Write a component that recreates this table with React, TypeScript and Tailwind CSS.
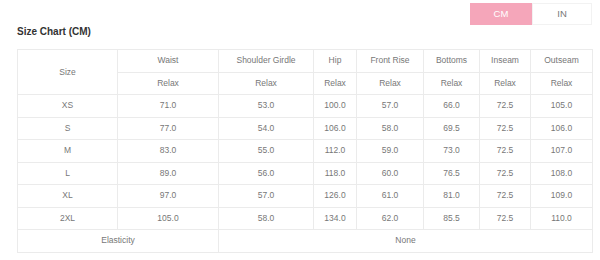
import React from 'react';

const columns = ['Waist', 'Shoulder Girdle', 'Hip', 'Front Rise', 'Bottoms', 'Inseam', 'Outseam'];
const widths = ['w-[100px]', 'w-[101px]', 'w-[95px]', 'w-[43px]', 'w-[67px]', 'w-[56px]', 'w-[51px]', 'w-[62px]'];

const rows: [string, string[]][] = [
  ['XS', ['71.0', '53.0', '100.0', '57.0', '66.0', '72.5', '105.0']],
  ['S', ['77.0', '54.0', '106.0', '58.0', '69.5', '72.5', '106.0']],
  ['M', ['83.0', '55.0', '112.0', '59.0', '73.0', '72.5', '107.0']],
  ['L', ['89.0', '56.0', '118.0', '60.0', '76.5', '72.5', '108.0']],
  ['XL', ['97.0', '57.0', '126.0', '61.0', '81.0', '72.5', '109.0']],
  ['2XL', ['105.0', '58.0', '134.0', '62.0', '85.5', '72.5', '110.0']],
];

const cell = 'border border-[#ebebeb] text-center align-middle p-0 font-normal';

export default function App() {
  return (
    <div className="w-[600px] h-[260px] bg-white font-['Liberation_Sans',Arial,sans-serif] text-[8.5px] text-[#777]">
      <div className="flex justify-end pt-[3px] pr-[8px]">
        <button className="w-[62px] h-[22px] bg-[#f5a6ba] text-white text-[9.5px]">CM</button>
        <button className="w-[60px] h-[22px] bg-white border border-[#f2f2f2] text-[#777] text-[9.5px]">IN</button>
      </div>
      <div className="pl-[17px] h-[13px] flex items-center text-[10px] font-bold text-[#333]">
        Size Chart (CM)
      </div>
      <table className="ml-[17px] mt-[11px] border-collapse table-fixed w-[575px]">
        <colgroup>
          {widths.map((w, i) => (
            <col key={i} className={w} />
          ))}
        </colgroup>
        <thead>
          <tr className="h-[22.5px]">
            <th rowSpan={2} className={cell}>Size</th>
            {columns.map(c => (
              <th key={c} className={cell}>{c}</th>
            ))}
          </tr>
          <tr className="h-[22.5px]">
            {columns.map(c => (
              <th key={c} className={cell}>Relax</th>
            ))}
          </tr>
        </thead>
        <tbody>
          {rows.map(([size, vals]) => (
            <tr key={size} className="h-[22.5px]">
              <td className={cell}>{size}</td>
              {vals.map((v, i) => (
                <td key={i} className={cell}>{v}</td>
              ))}
            </tr>
          ))}
          <tr className="h-[22.5px]">
            <td colSpan={2} className={cell}>Elasticity</td>
            <td colSpan={6} className={cell}>None</td>
          </tr>
        </tbody>
      </table>
    </div>
  );
}
